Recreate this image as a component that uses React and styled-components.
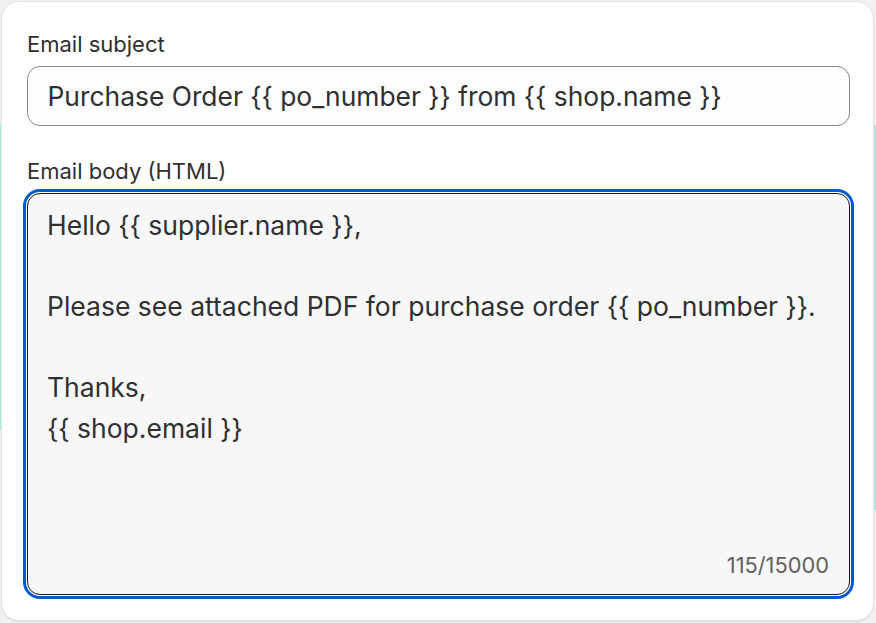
import React from "react";
import styled, { createGlobalStyle } from "styled-components";

const Global = createGlobalStyle`
  html, body { margin: 0; padding: 0; }
  body {
    width: 876px;
    height: 623px;
    overflow: hidden;
    font-family: Inter, "Noto Sans", "Liberation Sans", sans-serif;
    color: #303030;
    background-color: #f1f1f1;
    background-image:
      linear-gradient(#a6efdc, #a6efdc),
      linear-gradient(#a6efdc, #a6efdc);
    background-repeat: no-repeat;
    background-size: 3px 305px, 3px 385px;
    background-position: 0 125px, 873px 125px;
  }
  * { box-sizing: border-box; }
`;

const Page = styled.div`
  padding: 1px 2px 2px 1px;
`;

const Card = styled.section`
  width: 873px;
  height: 620px;
  background: #ffffff;
  border: 1px solid #e3e3e3;
  border-radius: 18px;
  box-shadow: 0 1px 1px rgba(0, 0, 0, 0.08);
  padding: 25px 23px 24px 25px;
  display: flex;
  flex-direction: column;
  gap: 28px;
`;

const Field = styled.div`
  display: flex;
  flex-direction: column;
  gap: ${(p) => p.$gap || 5}px;
`;

const Label = styled.label`
  font-size: 22px;
  line-height: 34px;
  color: #303030;
  font-weight: 400;
`;

const Input = styled.input`
  height: 60px;
  width: 100%;
  border: 1.1px solid #8a8a8a;
  border-radius: 13px;
  background: #fdfdfd;
  padding: 0 20px 0 19.5px;
  font-family: inherit;
  font-size: 26.4px;
  color: #303030;
  outline: none;
`;

const AreaBox = styled.div`
  height: 402px;
  border: 1.2px solid #1a1a1a;
  border-radius: 13px;
  background: #f7f7f7;
  outline: 3px solid #005bd3;
  outline-offset: 1.2px;
  display: flex;
  flex-direction: column;
  padding: 11px 20px 12px 19px;
`;

const Area = styled.textarea`
  flex: 1;
  border: none;
  background: transparent;
  resize: none;
  outline: none;
  padding: 0;
  margin: 0;
  font-family: inherit;
  font-size: 26.5px;
  line-height: 40.5px;
  color: #303030;
  overflow: hidden;
`;

const Counter = styled.div`
  align-self: flex-end;
  font-size: 21.8px;
  line-height: 34px;
  color: #616161;
`;

const body = `Hello {{ supplier.name }},

Please see attached PDF for purchase order {{ po_number }}.

Thanks,
{{ shop.email }}`;

export default function App() {
  return (
    <>
      <Global />
      <Page>
        <Card>
          <Field>
            <Label htmlFor="subject">Email subject</Label>
            <Input
              id="subject"
              readOnly
              value="Purchase Order {{ po_number }} from {{ shop.name }}"
            />
          </Field>
          <Field>
            <Label htmlFor="body">Email body (HTML)</Label>
            <AreaBox>
              <Area id="body" readOnly value={body} />
              <Counter>115/15000</Counter>
            </AreaBox>
          </Field>
        </Card>
      </Page>
    </>
  );
}
